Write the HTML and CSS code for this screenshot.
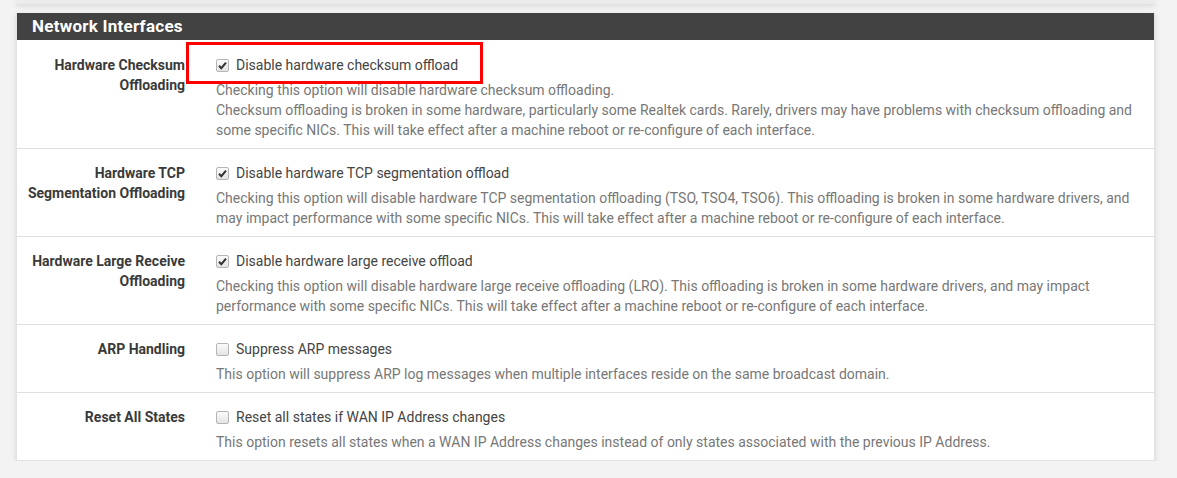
FILE: index.html
```html
<!DOCTYPE html>
<html>
<head>
<meta charset="utf-8">
<link rel="stylesheet" href="styles.css">
</head>
<body>
<div class="prev-panel"></div>
<div class="panel">
  <div class="panel-heading">Network Interfaces</div>
  <div class="row first">
    <div class="label">Hardware Checksum Offloading</div>
    <div class="content">
      <div class="check"><span class="box checked"><svg viewBox="0 0 13 13" width="13" height="13"><path d="M3 6.8 L5.3 9.2 L10 3.6" fill="none" stroke="#333" stroke-width="2"/></svg></span>Disable hardware checksum offload</div>
      <div class="help">Checking this option will disable hardware checksum offloading.<br>Checksum offloading is broken in some hardware, particularly some Realtek cards. Rarely, drivers may have problems with checksum offloading and some specific NICs. This will take effect after a machine reboot or re-configure of each interface.</div>
    </div>
    <div class="highlight"></div>
  </div>
  <div class="row">
    <div class="label">Hardware TCP Segmentation Offloading</div>
    <div class="content">
      <div class="check"><span class="box checked"><svg viewBox="0 0 13 13" width="13" height="13"><path d="M3 6.8 L5.3 9.2 L10 3.6" fill="none" stroke="#333" stroke-width="2"/></svg></span>Disable hardware TCP segmentation offload</div>
      <div class="help">Checking this option will disable hardware TCP segmentation offloading (TSO, TSO4, TSO6). This offloading is broken in some hardware drivers, and may impact performance with some specific NICs. This will take effect after a machine reboot or re-configure of each interface.</div>
    </div>
  </div>
  <div class="row">
    <div class="label">Hardware Large Receive Offloading</div>
    <div class="content">
      <div class="check"><span class="box checked"><svg viewBox="0 0 13 13" width="13" height="13"><path d="M3 6.8 L5.3 9.2 L10 3.6" fill="none" stroke="#333" stroke-width="2"/></svg></span>Disable hardware large receive offload</div>
      <div class="help">Checking this option will disable hardware large receive offloading (LRO). This offloading is broken in some hardware drivers, and may impact performance with some specific NICs. This will take effect after a machine reboot or re-configure of each interface.</div>
    </div>
  </div>
  <div class="row">
    <div class="label">ARP Handling</div>
    <div class="content">
      <div class="check"><span class="box"></span>Suppress ARP messages</div>
      <div class="help">This option will suppress ARP log messages when multiple interfaces reside on the same broadcast domain.</div>
    </div>
  </div>
  <div class="row">
    <div class="label">Reset All States</div>
    <div class="content">
      <div class="check"><span class="box"></span>Reset all states if WAN IP Address changes</div>
      <div class="help">This option resets all states when a WAN IP Address changes instead of only states associated with the previous IP Address.</div>
    </div>
  </div>
</div>
</body>
</html>
```
FILE: styles.css
```css
html, body {
  margin: 0;
  padding: 0;
  background: #f3f3f3;
  font-family: Roboto, "Liberation Sans", sans-serif;
  font-size: 14px;
  line-height: 20px;
}
.prev-panel {
  margin: 0 22px 0 16px;
  height: 4px;
  background: #ececec;
  box-shadow: 0 2px 5px rgba(0,0,0,0.12);
}
.panel {
  margin: 9px 22px 0 16px;
  background: #fff;
  border: 1px solid #e3e3e3;
  border-top: none;
  box-shadow: 0 2px 5px rgba(0,0,0,0.12);
}
.panel-heading {
  background: #424242;
  color: #fff;
  font-weight: 700;
  font-size: 17px;
  letter-spacing: 0.25px;
  height: 27px;
  line-height: 27px;
  padding-left: 15px;
}
.row {
  position: relative;
  display: grid;
  grid-template-columns: 168px 1fr;
  column-gap: 31px;
  padding: 14px 0 8px 0;
  border-top: 1px solid #e0e0e0;
}
.row.first { border-top: none; padding-top: 15px; }
.label {
  text-align: right;
  font-weight: 700;
  color: #3a3a3a;
}
.content {
  padding-right: 15px;
}
.check {
  display: flex;
  align-items: center;
  color: #444;
}
.box {
  width: 11px;
  height: 11px;
  border: 1px solid #b5b5b5;
  border-radius: 2px;
  background: linear-gradient(#fbfbfb, #e4e4e4);
  margin: 0 7px 0 0;
  display: inline-flex;
  align-items: center;
  justify-content: center;
  overflow: hidden;
}
.box svg { flex: none; }
.help {
  margin-top: 5px;
  color: #777;
}
.highlight {
  position: absolute;
  left: 169px;
  top: 2px;
  width: 291px;
  height: 36px;
  border: 3px solid #f00;
}
```
